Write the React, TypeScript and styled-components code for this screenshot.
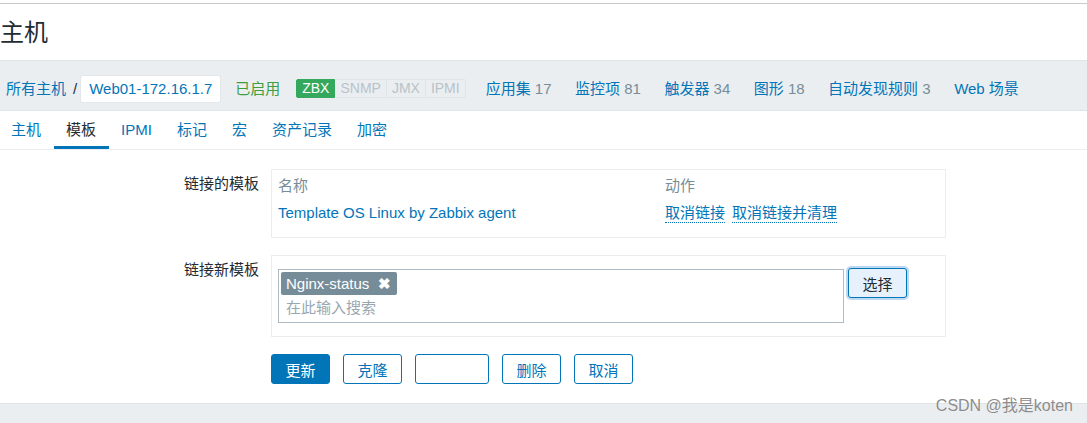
import React from "react";
import styled, { createGlobalStyle } from "styled-components";

const Global = createGlobalStyle`
  html, body { margin: 0; padding: 0; background: #fff; }
  body {
    font-family: "Liberation Sans", Arial, "Noto Sans CJK SC", sans-serif;
    font-size: 15px;
    color: #1f2c33;
  }
  * { box-sizing: border-box; }
`;

const Page = styled.div`
  position: relative;
  width: 1087px;
  height: 423px;
  overflow: hidden;
  display: flex;
  flex-direction: column;
`;

const TopRule = styled.div`
  margin-top: 3px;
  height: 1px;
  background: #c9c9c9;
`;

const Header = styled.header`
  height: 56px;
  display: flex;
  align-items: center;
`;

const Title = styled.h1`
  margin: 0;
  font-size: 24px;
  font-weight: normal;
  line-height: 30px;
  color: #1f2c33;
  margin-top: 2px;
`;

const NavBar = styled.nav`
  height: 51px;
  background: #ebeef0;
  border-top: 1px solid #dfe4e7;
  border-bottom: 1px solid #dfe4e7;
  display: flex;
  align-items: flex-start;
  white-space: nowrap;
  padding: 15px 0 0 6px;
`;

const Crumb = styled.a`
  color: #0275b8;
  text-decoration: none;
  line-height: 26px;
`;

const Slash = styled.span`
  color: #1f2c33;
  line-height: 26px;
  margin: 0 4px 0 7px;
`;

const HostBox = styled.span`
  display: inline-block;
  height: 26px;
  line-height: 26px;
  padding: 0 8px;
  width: 139px;
  white-space: nowrap;
  background: #fff;
  border-radius: 2px;
  color: #0275b8;
  box-shadow: 0 0 0 1px #e3e7ea;
`;

const Status = styled.span`
  color: #3f9e3f;
  line-height: 26px;
  margin-left: 15px;
`;

const Badges = styled.span`
  display: inline-flex;
  margin: 3px 20px 0 16px;
  height: 19px;
`;

const Badge = styled.span<{ $on?: boolean }>`
  display: inline-block;
  height: 19px;
  line-height: 17px;
  padding: 0 5px;
  font-size: 14px;
  border: 1px solid ${(p) => (p.$on ? "#34a85c" : "#dfe4e7")};
  border-left-width: ${(p) => (p.$on ? "1px" : "0")};
  background: ${(p) => (p.$on ? "#34a85c" : "#ebeef0")};
  color: ${(p) => (p.$on ? "#fff" : "#b7c3ca")};
  &:first-child { border-radius: 2px 0 0 2px; }
  &:last-child { border-radius: 0 2px 2px 0; }
`;

const NavLinks = styled.span`
  display: inline-flex;
  gap: 23.5px;
  line-height: 26px;
`;

const NavLink = styled.a`
  color: #0275b8;
  text-decoration: none;
`;

const Count = styled.span`
  color: #768d99;
`;

const Tabs = styled.ul`
  list-style: none;
  margin: 0 0 0 -1.5px;
  padding: 0;
  height: 39px;
  display: flex;
  border-bottom: 1px solid #ebeef0;
`;

const Tab = styled.li<{ $active?: boolean }>`
  padding: 0 12.5px;
  height: 38px;
  color: ${(p) => (p.$active ? "#1f2c33" : "#0275b8")};
  border-bottom: 3px solid ${(p) => (p.$active ? "#0275b8" : "transparent")};
  line-height: 37px;
`;

const Form = styled.div`
  flex: 1;
  padding-top: 19px;
  display: grid;
  grid-template-columns: 259px 675px;
  column-gap: 12px;
  row-gap: 17px;
  align-content: start;
`;

const Label = styled.div`
  text-align: right;
  line-height: 18px;
  padding-top: 6px;
  color: #1f2c33;
`;

const FieldBox = styled.div<{ $pad: string }>`
  border: 1px solid #ebeef0;
  padding: ${(p) => p.$pad};
`;

const TableGrid = styled.div`
  display: grid;
  grid-template-columns: 387px 1fr;
  row-gap: 9px;
  line-height: 18px;
`;

const Th = styled.div`
  color: #768d99;
`;

const TLink = styled.a`
  color: #0275b8;
  text-decoration: none;
`;

const Actions = styled.div`
  display: flex;
  gap: 7px;
`;

const DotLink = styled.a`
  color: #0275b8;
  text-decoration: none;
  border-bottom: 1px dotted #0275b8;
  line-height: 18px;
`;

const MultiRow = styled.div`
  display: flex;
  align-items: flex-start;
  gap: 4px;
`;

const Multi = styled.div`
  width: 566px;
  height: 54px;
  border: 1px solid #acbbc4;
  padding: 2px;
  display: flex;
  flex-direction: column;
  align-items: flex-start;
`;

const Tag = styled.span`
  display: inline-flex;
  align-items: center;
  height: 23px;
  padding: 0 6px 0 5px;
  background: #768d99;
  border-radius: 2px;
  color: #fff;
  gap: 9px;
`;

const X = styled.span`
  font-size: 15px;
  font-weight: bold;
  line-height: 1;
`;

const Placeholder = styled.span`
  color: #9aa7af;
  line-height: 22px;
  padding-left: 5px;
  margin-top: 2px;
`;

const SelectBtn = styled.button`
  margin-top: -1px;
  width: 59px;
  height: 30px;
  font: inherit;
  color: #1f2c33;
  background: #e6f1fb;
  border: 1px solid #0275b8;
  border-radius: 3px;
  box-shadow: 0 0 0 2px #bcd9f1;
  padding: 0;
`;

const ButtonRow = styled.div`
  grid-column: 2;
  display: flex;
  gap: 13px;
`;

const Btn = styled.button<{ $primary?: boolean; $w?: number }>`
  width: ${(p) => p.$w ?? 59}px;
  height: 30px;
  font: inherit;
  padding: 0;
  border-radius: 3px;
  border: 1px solid #0275b8;
  background: ${(p) => (p.$primary ? "#0275b8" : "#fff")};
  color: ${(p) => (p.$primary ? "#fff" : "#0275b8")};
`;

const Footer = styled.div`
  height: 20px;
  background: #ebeef0;
  border-top: 1px solid #dfe4e7;
`;

const Watermark = styled.span`
  position: absolute;
  right: 14px;
  top: 396px;
  font-size: 16px;
  line-height: 20px;
  color: #8c8c8c;
  text-shadow: 0 0 1px #fff;
`;

export default function App() {
  return (
    <Page>
      <Global />
      <TopRule />
      <Header>
        <Title>主机</Title>
      </Header>
      <NavBar>
        <Crumb>所有主机</Crumb>
        <Slash>/</Slash>
        <HostBox>Web01-172.16.1.7</HostBox>
        <Status>已启用</Status>
        <Badges>
          <Badge $on>ZBX</Badge>
          <Badge>SNMP</Badge>
          <Badge>JMX</Badge>
          <Badge>IPMI</Badge>
        </Badges>
        <NavLinks>
          <NavLink>应用集 <Count>17</Count></NavLink>
          <NavLink>监控项 <Count>81</Count></NavLink>
          <NavLink>触发器 <Count>34</Count></NavLink>
          <NavLink>图形 <Count>18</Count></NavLink>
          <NavLink>自动发现规则 <Count>3</Count></NavLink>
          <NavLink>Web 场景</NavLink>
        </NavLinks>
      </NavBar>
      <Tabs>
        <Tab>主机</Tab>
        <Tab $active>模板</Tab>
        <Tab>IPMI</Tab>
        <Tab>标记</Tab>
        <Tab>宏</Tab>
        <Tab>资产记录</Tab>
        <Tab>加密</Tab>
      </Tabs>
      <Form>
        <Label>链接的模板</Label>
        <FieldBox $pad="7px 6px 14px 6px">
          <TableGrid>
            <Th>名称</Th>
            <Th>动作</Th>
            <TLink>Template OS Linux by Zabbix agent</TLink>
            <Actions>
              <DotLink>取消链接</DotLink>
              <DotLink>取消链接并清理</DotLink>
            </Actions>
          </TableGrid>
        </FieldBox>
        <Label>链接新模板</Label>
        <FieldBox $pad="13px 6px 13px 6px">
          <MultiRow>
            <Multi>
              <Tag>
                Nginx-status <X>✖</X>
              </Tag>
              <Placeholder>在此输入搜索</Placeholder>
            </Multi>
            <SelectBtn>选择</SelectBtn>
          </MultiRow>
        </FieldBox>
        <ButtonRow>
          <Btn $primary>更新</Btn>
          <Btn>克隆</Btn>
          <Btn $w={74}></Btn>
          <Btn>删除</Btn>
          <Btn>取消</Btn>
        </ButtonRow>
      </Form>
      <Footer />
      <Watermark>CSDN @我是koten</Watermark>
    </Page>
  );
}
